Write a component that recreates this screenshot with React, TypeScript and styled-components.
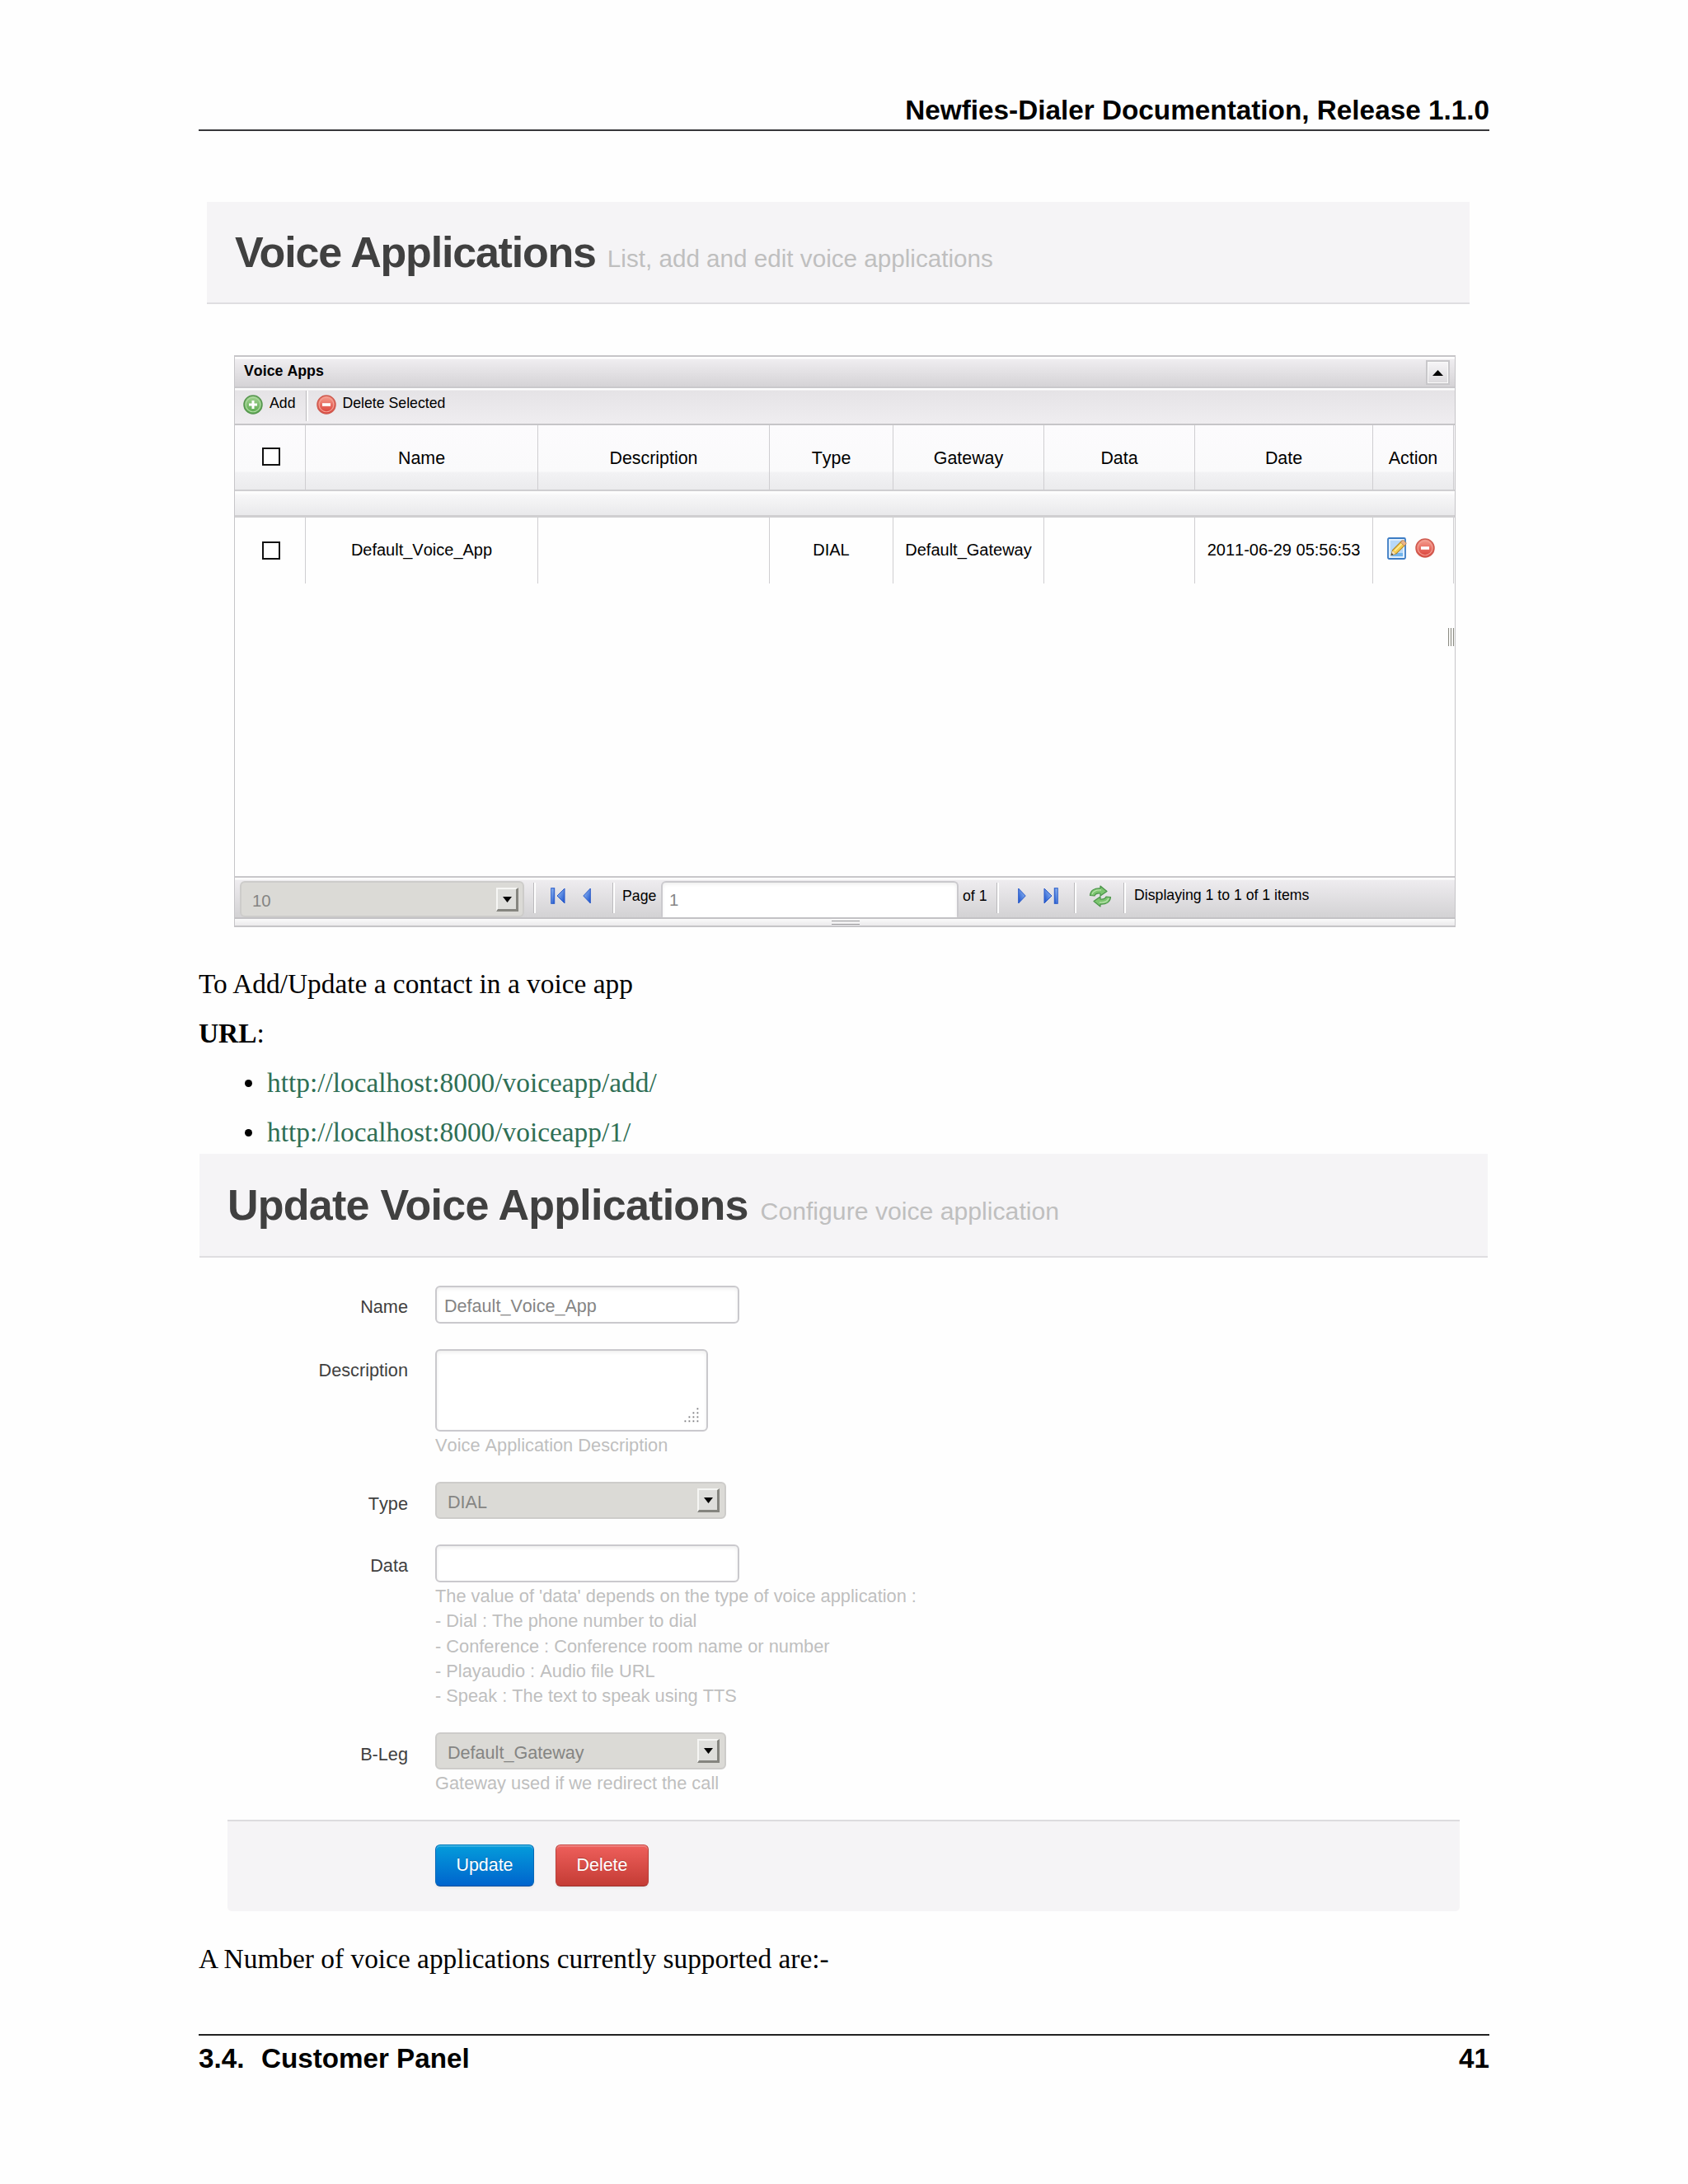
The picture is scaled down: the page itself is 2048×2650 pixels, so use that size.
import React from 'react';
import styled, { createGlobalStyle } from 'styled-components';

const sans = `"Liberation Sans", Arial, Helvetica, sans-serif`;
const serif = `"Liberation Serif", "Times New Roman", Times, serif`;

const GlobalStyle = createGlobalStyle`
  *, *::before, *::after { box-sizing: border-box; }
  body { margin: 0; background: #fefefe; }
`;

const Page = styled.div`
  display: flex;
  flex-direction: column;
  align-items: flex-start;
  width: 2048px;
  height: 2650px;
  padding-left: 241px;
  background: #fefefe;
  color: #000;
  font-family: ${sans};
  white-space: nowrap;
  overflow: hidden;
`;

const RunningHead = styled.header`
  width: 1566px;
  height: 159px;
  padding-top: 114px;
  border-bottom: 2px solid #37373a;
  text-align: right;
  font: bold 33.3px/40px ${sans};
`;

const RunningFoot = styled.footer`
  display: flex;
  width: 1566px;
  margin-top: 71px;
  padding-top: 8px;
  border-top: 2px solid #222;
  font: bold 33.2px/40px ${sans};
`;

const SectionNumber = styled.span`
  width: 76px;
`;

const PageNumber = styled.span`
  margin-left: auto;
`;

/* ---------- banners ---------- */

const Banner = styled.div<{ $x: number; $width: number; $height: number; $top: number; $padX: number; $padY: number; $gap: number }>`
  display: flex;
  align-items: baseline;
  gap: ${(p) => p.$gap}px;
  width: ${(p) => p.$width}px;
  height: ${(p) => p.$height}px;
  margin: ${(p) => p.$top}px 0 0 ${(p) => p.$x}px;
  padding: ${(p) => p.$padY}px 0 0 ${(p) => p.$padX}px;
  background: #f5f4f6;
  border-bottom: 2px solid #dfdee1;
`;

const BannerTitle = styled.h1<{ $spacing: number }>`
  margin: 0;
  color: #404040;
  font: bold 52px/60px ${sans};
  letter-spacing: ${(p) => p.$spacing}px;
`;

const BannerNote = styled.small<{ $size: number }>`
  color: #bfbfbf;
  font: ${(p) => p.$size}px/60px ${sans};
`;

/* ---------- data grid ---------- */

const GridPanel = styled.section`
  position: relative;
  display: flex;
  flex-direction: column;
  width: 1482px;
  height: 694px;
  margin: 62px 0 0 43px;
  border: solid #c6c5c8;
  border-width: 2px 1px;
  background: #fefefe;

  && * { font-kerning: none; }
`;

const GridTitleBar = styled.div`
  display: flex;
  justify-content: space-between;
  height: 38px;
  padding: 0 6px 0 11px;
  border-bottom: 2px solid #c9c8cb;
  background: linear-gradient(#fff 0 2px, #efedf0 3px, #d5d3d6 100%);
  font: bold 17.8px/20px ${sans};
`;

const GridTitle = styled.span`
  padding-top: 7px;
`;

const CollapseButton = styled.div`
  display: flex;
  align-items: center;
  justify-content: center;
  width: 29px;
  height: 30px;
  margin-top: 4px;
  border: 2px solid #c8c7ca;
  background: linear-gradient(#f6f5f7, #dcdadd);
  box-shadow: inset 0 0 0 1px #fafafa;
`;

const GridToolbar = styled.div`
  display: flex;
  height: 45px;
  padding-left: 10px;
  border-bottom: 2px solid #c6c5c8;
  background: linear-gradient(#fcfcfc 0 2px, #e5e3e6 3px, #efedf0 100%);
`;

const ToolbarAction = styled.div<{ $gap?: number }>`
  display: flex;
  gap: ${(p) => p.$gap ?? 8}px;
  padding-top: 8px;
  font: 17.7px/20px ${sans};
`;

const ToolbarRule = styled.div<{ $before: number; $after?: number; $top?: number }>`
  width: 3px;
  height: 37px;
  margin: ${(p) => p.$top ?? 3}px ${(p) => p.$after ?? 0}px 0 ${(p) => p.$before}px;
  border-left: 1px solid #bbbabd;
  background: #fff;
`;

const columns = '86px 282px 281px 150px 183px 183px 216px 98px';

const HeaderRow = styled.div`
  display: grid;
  grid-template-columns: ${columns};
  height: 80px;
  border-bottom: 2px solid #cfced1;
  background: linear-gradient(#fcfbfd 0%, #fafafb 71%, #f2f2f4 74%, #ebebed 100%);
  font: 21.4px/24px ${sans};
`;

const GridSpacer = styled.div`
  height: 32px;
  border-bottom: 3px solid #d0cfd1;
  background: linear-gradient(#fdfdfd 0 2px, #f7f7f8 5px, #e9e9eb 100%);
`;

const DataRow = styled.div`
  display: grid;
  grid-template-columns: ${columns};
  height: 80px;
  font: 20px/24px ${sans};
`;

const Cell = styled.div<{ $padTop: number; $padRight?: number; $padLeft?: number }>`
  display: flex;
  justify-content: center;
  align-items: flex-start;
  gap: 10px;
  padding: ${(p) => p.$padTop}px ${(p) => p.$padRight ?? 0}px 0 ${(p) => p.$padLeft ?? 0}px;
  border-right: 1px solid #cfced1;
`;

const CheckBox = styled.span<{ $top: number }>`
  width: 22px;
  height: 22px;
  margin-top: ${(p) => p.$top}px;
  border: 2px solid #111;
  background: #fff;
`;

const GridBody = styled.div`
  flex: 1;
`;

const WidthGrip = styled.div`
  position: absolute;
  right: 0;
  top: 329px;
  width: 8px;
  height: 22px;
  background: repeating-linear-gradient(90deg, #8c8c84 0 1px, #f6f6f4 1px 3px);
`;

const Pager = styled.div`
  display: flex;
  align-items: flex-start;
  height: 52px;
  padding-left: 6px;
  border-top: 2px solid #c8c7ca;
  border-bottom: 2px solid #c3c2c5;
  background: linear-gradient(#fff 0 2px, #eeecef 3px, #d3d2d4 100%);
  font: 17.7px/20px ${sans};
`;

const PagerText = styled.span<{ $before: number; $width?: number; $top?: number }>`
  width: ${(p) => (p.$width ? `${p.$width}px` : 'auto')};
  margin: ${(p) => p.$top ?? 12}px 0 0 ${(p) => p.$before}px;
`;

const PagerIcon = styled.span<{ $before: number; $top?: number }>`
  display: flex;
  margin: ${(p) => p.$top ?? 12}px 0 0 ${(p) => p.$before}px;
`;

const HeightGrip = styled.div`
  display: flex;
  justify-content: center;
  height: 8px;
  padding: 2px 0 0 1px;
  background: linear-gradient(#fafafa, #ebeaec);

  &::after {
    content: '';
    width: 34px;
    height: 5px;
    border: solid #98979a;
    border-width: 1px 0;
  }
`;

/* ---------- form fields ---------- */

const TextBox = styled.div<{ $width: number; $height?: number; $size?: number }>`
  display: flex;
  justify-content: flex-start;
  width: ${(p) => p.$width}px;
  height: ${(p) => p.$height ?? 46}px;
  padding: 7.5px 9px 0;
  border: 2px solid #cac9cd;
  border-radius: 6px;
  background: #fff;
  box-shadow: inset 0 2px 4px rgba(0, 0, 0, 0.07);
  color: #858585;
  font: ${(p) => p.$size ?? 21.6}px/30px ${sans};
`;

const PageBox = styled(TextBox)`
  margin-top: 4px;
  height: 44px;
  padding: 6px 8px 0;
  border-bottom: 0;
  border-radius: 6px 6px 2px 2px;
`;

const DescriptionBox = styled(TextBox)`
  justify-content: flex-end;
  align-items: flex-end;
  padding: 0 9px 9px;
`;

const SelectFrame = styled.div<{ $width: number; $height: number; $padRight: number; $padTop: number }>`
  display: flex;
  justify-content: space-between;
  width: ${(p) => p.$width}px;
  height: ${(p) => p.$height}px;
  padding: ${(p) => p.$padTop}px ${(p) => p.$padRight}px 0 13px;
  border: 2px solid #cdccca;
  border-radius: 6px;
  background: #dbdad6;
  color: #858583;
  font: 21.6px/30px ${sans};
`;

const PagerSelect = styled(SelectFrame)`
  margin-top: 4px;
  font-size: 20.4px;
`;

const SelectArrow = styled.span<{ $lift: number }>`
  display: flex;
  align-items: center;
  justify-content: center;
  width: 27px;
  height: 29px;
  margin-top: -${(p) => p.$lift}px;
  border: solid;
  border-width: 2px 3px 3px 2px;
  border-color: #f6f6f4 #85857f #85857f #f6f6f4;
  background: #dededb;
`;

const Form = styled.div`
  display: grid;
  grid-template-rows: 77px 161px 76px 228px 106px;
  width: 1564px;
  margin-top: 34px;

  && * { font-kerning: none; }
`;

const FieldRow = styled.div`
  display: grid;
  grid-template-columns: 254px 1fr;
  column-gap: 33px;
`;

const Label = styled.label<{ $top?: number }>`
  padding-top: ${(p) => p.$top ?? 10.5}px;
  text-align: right;
  color: #404040;
  font: 21.7px/30px ${sans};
`;

const Help = styled.div`
  margin-top: 2px;
  color: #bfbfbf;
  font: 21.8px/30.25px ${sans};
`;

const Actions = styled.div`
  display: flex;
  gap: 26px;
  width: 1495px;
  height: 111px;
  margin-left: 35px;
  padding: 28px 0 0 252px;
  border-top: 2px solid #dcdbde;
  border-radius: 0 0 5px 5px;
  background: #f5f4f6;
`;

const ActionButton = styled.button<{ $danger?: boolean; $width: number }>`
  width: ${(p) => p.$width}px;
  height: 51px;
  padding: 0 0 2px;
  border: 1px solid;
  border-color: ${(p) => (p.$danger ? '#c9514e #b8403a #9c2f2a' : '#0a80bd #0668b8 #024c9c')};
  border-radius: 6px;
  background: ${(p) => (p.$danger ? 'linear-gradient(#ee5f5b, #c43c35)' : 'linear-gradient(#049cdb, #0064cd)')};
  box-shadow: inset 0 2px 0 rgba(255, 255, 255, 0.2), 0 2px 3px rgba(0, 0, 0, 0.06);
  color: #fff;
  font: 21.4px/44px ${sans};
  text-shadow: 0 -1px 0 rgba(0, 0, 0, 0.25);
`;

/* ---------- prose ---------- */

const Prose = styled.div<{ $top: number }>`
  display: flex;
  flex-direction: column;
  gap: 20px;
  margin-top: ${(p) => p.$top}px;
  font: 33.38px/40px ${serif};
`;

const Paragraph = styled.p`
  margin: 0;
`;

const LinkList = styled.ul`
  display: flex;
  flex-direction: column;
  gap: 20px;
  margin: 0;
  padding: 0;
  list-style: none;
`;

const LinkItem = styled.li`
  display: flex;
  align-items: center;
  gap: 18px;
  padding-left: 56px;
  color: #2f6f55;

  &::before {
    content: '';
    width: 9px;
    height: 9px;
    border-radius: 50%;
    background: #000;
  }
`;

/* ---------- icons ---------- */

const RoundIcon = ({ kind, id }: { kind: 'add' | 'remove'; id: string }) => {
  const add = kind === 'add';
  return (
    <svg width="24" height="24" viewBox="0 0 24 24">
      <defs>
        <linearGradient id={id} x1="0" y1="0" x2="0" y2="1">
          <stop offset="0" stopColor={add ? '#a4d394' : '#f6a192'} />
          <stop offset="1" stopColor={add ? '#57a84b' : '#d93c35'} />
        </linearGradient>
      </defs>
      <circle cx="12" cy="12" r="11" fill={`url(#${id})`} stroke={add ? '#579650' : '#cf5b50'} strokeWidth="1.5" />
      <circle cx="12" cy="12" r="8.8" fill="none" stroke={add ? '#b0dba5' : '#f3a195'} strokeWidth="1.1" />
      <path d={add ? 'M12 7v10M7 12h10' : 'M7 12h10'} stroke="#fff" strokeWidth={add ? 3 : 3.6} />
    </svg>
  );
};

const EditIcon = () => (
  <svg width="24" height="27" viewBox="0 0 24 27">
    <rect x="1" y="1" width="21" height="25" rx="1.5" fill="#cfe5fb" stroke="#3c7cc4" strokeWidth="1.8" />
    <rect x="3" y="3" width="17" height="21" fill="#b7d8f8" stroke="#f4faff" strokeWidth="1.2" />
    <path d="M10 19h9v4H5z" fill="#6fb4ee" />
    <path d="M5 21.5l1.6-6L17.8 4.2l4.6 4.4L11 19.8z" fill="#f5cf52" stroke="#b18325" strokeWidth="1.1" />
    <path d="M16.2 6l4.5 4.4 2-2.1c.6-.8.4-1.6-.3-2.4l-2-1.9c-.8-.6-1.7-.5-2.3.1z" fill="#e9b48a" stroke="#b47a48" strokeWidth=".8" />
    <path d="M5 21.5l1.4-5.1 3.8 3.7z" fill="#f3dfbd" />
    <path d="M4.8 21.8l.7-2.7 2 2z" fill="#333" />
    <path d="M9 16.6l8.6-8.6" stroke="#fff0a0" strokeWidth="1.4" />
  </svg>
);

const Caret = ({ up = false, width = 11, height = 7 }: { up?: boolean; width?: number; height?: number }) => (
  <svg width={width} height={height} viewBox="0 0 12 7" preserveAspectRatio="none">
    <path d={up ? 'M6 0l6 7H0z' : 'M0 0h12L6 7z'} fill="#050505" />
  </svg>
);

const StepIcon = ({ id, bar = false, forward = false }: { id: string; bar?: boolean; forward?: boolean }) => {
  const w = bar ? 18 : 10;
  return (
    <svg width={w} height="20" viewBox={`0 0 ${w} 20`}>
      <defs>
        <linearGradient id={id} x1="0" y1="0" x2="1" y2="1">
          <stop offset="0" stopColor="#a3c8f8" />
          <stop offset="1" stopColor="#154dcb" />
        </linearGradient>
      </defs>
      <g transform={forward ? `translate(${w} 0) scale(-1 1)` : undefined} fill={`url(#${id})`} stroke="#2a5bc9" strokeWidth="1">
        {bar && <rect x=".7" y=".7" width="4" height="18.6" />}
        <path d={bar ? 'M17 1v18L8 10z' : 'M9.3 1v18L.8 10z'} />
      </g>
    </svg>
  );
};

const RefreshIcon = () => (
  <svg width="28" height="27" viewBox="0 0 28 27">
    <g fill="#7cc56f" stroke="#499448" strokeWidth="1.2" strokeLinejoin="round">
      <path d="M1.5 12.5C2 6.5 7 3.5 14 4V1l8 6.5-8 5.5v-3C10 9.5 8 10.5 7 13z" />
      <path d="M26.5 14.5C26 20.5 21 23.5 14 23v3l-8-6.5 8-5.5v3c4 .5 6-.5 7-3z" />
    </g>
    <path d="M4 11c1.5-4 5-5.5 11-5M24 16c-1.5 4-5 5.5-11 5" fill="none" stroke="#b7e2ab" strokeWidth="1.3" />
  </svg>
);

const ResizeDots = () => (
  <svg width="18" height="18" viewBox="0 0 18 18" fill="#77777b">
    {[[16, 1], [11, 6], [16, 6], [6, 11], [11, 11], [16, 11], [1, 16], [6, 16], [11, 16], [16, 16]].map(([x, y]) => (
      <rect key={`${x}-${y}`} x={x - 0.5} y={y - 0.5} width="1.8" height="1.8" />
    ))}
  </svg>
);

/* ---------- composed parts ---------- */

const Select = ({ children }: { children: React.ReactNode }) => (
  <SelectFrame $width={353} $height={45} $padRight={6} $padTop={8}>
    {children}
    <SelectArrow $lift={2}>
      <Caret />
    </SelectArrow>
  </SelectFrame>
);

const headings = ['Name', 'Description', 'Type', 'Gateway', 'Data', 'Date', 'Action'];
const record = ['Default_Voice_App', '', 'DIAL', 'Default_Gateway', '', '2011-06-29 05:56:53'];
const dataHelp = [
  "The value of 'data' depends on the type of voice application :",
  '- Dial : The phone number to dial',
  '- Conference : Conference room name or number',
  '- Playaudio : Audio file URL',
  '- Speak : The text to speak using TTS',
];

const VoiceAppsGrid = () => (
  <GridPanel>
    <GridTitleBar>
      <GridTitle>Voice Apps</GridTitle>
      <CollapseButton>
        <Caret up width={13} height={7} />
      </CollapseButton>
    </GridTitleBar>
    <GridToolbar>
      <ToolbarAction>
        <RoundIcon kind="add" id="tool-add" />
        <span>Add</span>
      </ToolbarAction>
      <ToolbarRule $before={13} $after={10} />
      <ToolbarAction $gap={7}>
        <RoundIcon kind="remove" id="tool-remove" />
        <span>Delete Selected</span>
      </ToolbarAction>
    </GridToolbar>
    <HeaderRow>
      <Cell $padTop={27} $padLeft={3}>
        <CheckBox $top={0} />
      </Cell>
      {headings.map((text) => (
        <Cell key={text} $padTop={28}>{text}</Cell>
      ))}
    </HeaderRow>
    <GridSpacer />
    <GridBody>
      <DataRow>
        <Cell $padTop={27} $padLeft={3}>
          <CheckBox $top={2} />
        </Cell>
        {record.map((text, i) => (
          <Cell key={i} $padTop={27}>{text}</Cell>
        ))}
        <Cell $padTop={24} $padRight={6}>
          <EditIcon />
          <PagerIcon $before={0} $top={1}>
            <RoundIcon kind="remove" id="row-remove" />
          </PagerIcon>
        </Cell>
      </DataRow>
    </GridBody>
    <Pager>
      <PagerSelect $width={345} $height={44} $padRight={5} $padTop={7}>
        10
        <SelectArrow $lift={1}>
          <Caret />
        </SelectArrow>
      </PagerSelect>
      <ToolbarRule $before={11} $top={6} />
      <PagerIcon $before={18}><StepIcon id="first" bar /></PagerIcon>
      <PagerIcon $before={21}><StepIcon id="prev" /></PagerIcon>
      <ToolbarRule $before={26} $top={6} />
      <PagerText $before={9} $width={47}>Page</PagerText>
      <PageBox $width={361} $size={20.4}>1</PageBox>
      <PagerText $before={5} $width={41}>of 1</PagerText>
      <ToolbarRule $before={0} $top={6} />
      <PagerIcon $before={23}><StepIcon id="next" forward /></PagerIcon>
      <PagerIcon $before={21}><StepIcon id="last" bar forward /></PagerIcon>
      <ToolbarRule $before={19} $top={6} />
      <PagerIcon $before={15} $top={9}><RefreshIcon /></PagerIcon>
      <ToolbarRule $before={14} $top={6} />
      <PagerText $before={10} $top={11}>Displaying 1 to 1 of 1 items</PagerText>
    </Pager>
    <HeightGrip />
    <WidthGrip />
  </GridPanel>
);

const VoiceAppForm = () => (
  <Form>
    <FieldRow>
      <Label>Name</Label>
      <TextBox $width={369}>Default_Voice_App</TextBox>
    </FieldRow>
    <FieldRow>
      <Label>Description</Label>
      <div>
        <DescriptionBox $width={331} $height={100}>
          <ResizeDots />
        </DescriptionBox>
        <Help>Voice Application Description</Help>
      </div>
    </FieldRow>
    <FieldRow>
      <Label $top={11.5}>Type</Label>
      <Select>DIAL</Select>
    </FieldRow>
    <FieldRow>
      <Label>Data</Label>
      <div>
        <TextBox $width={369} />
        <Help>
          {dataHelp.map((line) => (
            <div key={line}>{line}</div>
          ))}
        </Help>
      </div>
    </FieldRow>
    <FieldRow>
      <Label $top={11.5}>B-Leg</Label>
      <div>
        <Select>Default_Gateway</Select>
        <Help>Gateway used if we redirect the call</Help>
      </div>
    </FieldRow>
  </Form>
);

export default function App() {
  return (
    <>
      <GlobalStyle />
      <Page>
        <RunningHead>Newfies-Dialer Documentation, Release 1.1.0</RunningHead>

        <Banner $x={10} $width={1532} $height={124} $top={86} $padX={34} $padY={31} $gap={14}>
          <BannerTitle $spacing={-1.2}>Voice Applications</BannerTitle>
          <BannerNote $size={29.65}>List, add and edit voice applications</BannerNote>
        </Banner>
        <VoiceAppsGrid />

        <Prose $top={49}>
          <Paragraph>To Add/Update a contact in a voice app</Paragraph>
          <Paragraph><b>URL</b>:</Paragraph>
          <LinkList>
            <LinkItem>http://localhost:8000/voiceapp/add/</LinkItem>
            <LinkItem>http://localhost:8000/voiceapp/1/</LinkItem>
          </LinkList>
        </Prose>

        <Banner $x={1} $width={1563} $height={126} $top={6} $padX={34} $padY={32} $gap={15}>
          <BannerTitle $spacing={-0.74}>Update Voice Applications</BannerTitle>
          <BannerNote $size={30.2}>Configure voice application</BannerNote>
        </Banner>
        <VoiceAppForm />
        <Actions>
          <ActionButton $width={120}>Update</ActionButton>
          <ActionButton $width={113} $danger>Delete</ActionButton>
        </Actions>

        <Prose $top={38}>
          <Paragraph>A Number of voice applications currently supported are:-</Paragraph>
        </Prose>
        <RunningFoot>
          <SectionNumber>3.4.</SectionNumber>
          <span>Customer Panel</span>
          <PageNumber>41</PageNumber>
        </RunningFoot>
      </Page>
    </>
  );
}
